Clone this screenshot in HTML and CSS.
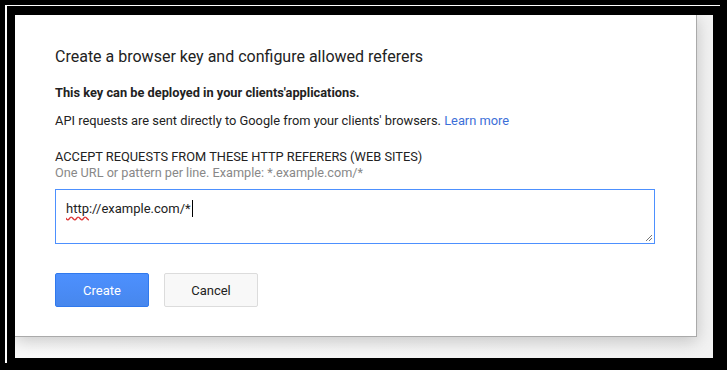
FILE: index.html
```html
<!DOCTYPE html>
<html lang="en">
<head>
    <meta charset="UTF-8">
    <title>Create a browser key</title>
    <link rel="stylesheet" href="styles.css">
</head>
<body>
<div class="frame">
    <div class="page">
        <div class="dialog">
            <h1 class="title">Create a browser key and configure allowed referers</h1>
            <p class="lead">This key can be deployed in your clients'applications.</p>
            <p class="info">API requests are sent directly to Google from your clients' browsers. <a href="#" class="link">Learn more</a></p>

            <div class="field">
                <div class="label">ACCEPT REQUESTS FROM THESE HTTP REFERERS (WEB SITES)</div>
                <div class="hint">One URL or pattern per line. Example: *.example.com/*</div>
                <div class="textbox">
                    <span class="typo">http</span>://example.com/*<span class="caret"></span>
                    <svg class="grip" width="8" height="8" viewBox="0 0 8 8">
                        <path d="M7 1 L1 7 M7 4 L4 7" stroke="#777" stroke-width="1"/>
                    </svg>
                </div>
            </div>

            <div class="actions">
                <button class="btn btn-primary">Create</button>
                <button class="btn">Cancel</button>
            </div>
        </div>
    </div>
</div>
</body>
</html>
```

FILE: styles.css
```css
body {
    margin: 0;
    padding: 5px 0 0 5px;
    background: #000;
    font-family: Roboto, "Liberation Sans", sans-serif;
    color: #222;
}
.frame {
    width: 715px;
    height: 358px;
    padding: 9px 0 0 8px;
    border-top: 1px solid #fff;
    border-left: 2px solid #fff;
    box-sizing: border-box;
}
.page {
    width: 698px;
    height: 343px;
    overflow: hidden;
    background: linear-gradient(to right, #fafafa, #f2f2f2);
}
.dialog {
    width: 682px;
    height: 322px;
    box-sizing: border-box;
    padding: 31px 40px 0 40px;
    background: #fff;
    border-right: 1px solid #aaa;
    border-bottom: 1px solid #aaa;
    box-shadow: 0 4px 16px rgba(0, 0, 0, 0.2);
}
.title {
    margin: 0;
    font-size: 16px;
    font-weight: 400;
    line-height: 22px;
    color: #222;
}
.lead {
    margin: 16px 0 0;
    font-size: 12.8px;
    font-weight: 700;
    line-height: 18px;
}
.info {
    margin: 10px 0 0;
    font-size: 12.85px;
    line-height: 18px;
}
.link {
    color: #3c6fd8;
    text-decoration: none;
}
.field {
    margin-top: 19px;
}
.label {
    font-size: 12.8px;
    line-height: 16px;
}
.hint {
    font-size: 12.7px;
    line-height: 16px;
    color: #888;
}
.textbox {
    position: relative;
    margin-top: 8px;
    width: 600px;
    height: 55px;
    box-sizing: border-box;
    padding: 10px 10px;
    border: 1px solid #4d90fe;
    font-size: 13px;
    line-height: 18px;
}
.typo {
    text-decoration: underline wavy #d33;
    text-underline-offset: 3px;
}
.caret {
    display: inline-block;
    width: 1px;
    height: 17px;
    margin-left: 1px;
    background: #000;
    vertical-align: top;
}
.grip {
    position: absolute;
    right: 1px;
    bottom: 1px;
}
.actions {
    display: flex;
    gap: 15px;
    margin-top: 29px;
}
.btn {
    width: 94px;
    height: 34px;
    font-family: Roboto, "Liberation Sans", sans-serif;
    font-size: 13px;
    color: #222;
    background: #f8f8f8;
    border: 1px solid #dcdcdc;
    border-radius: 2px;
}
.btn-primary {
    color: #fff;
    background: linear-gradient(#4d90fe, #4787ed);
    border-color: #3079ed;
}
```
